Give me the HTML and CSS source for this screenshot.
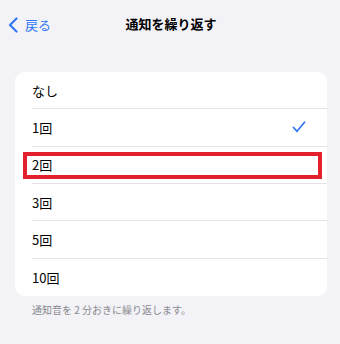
FILE: index.html
```html
<!DOCTYPE html>
<html lang="ja">
<head>
<meta charset="utf-8">
<link rel="stylesheet" href="styles.css">
</head>
<body>
<div class="page">
  <header class="nav">
    <div class="back">
      <svg class="chev" width="10" height="16" viewBox="0 0 10 16"><path d="M8.5 1.5 L2 8 L8.5 14.5" fill="none" stroke="#3478f6" stroke-width="2.2" stroke-linecap="round" stroke-linejoin="round"/></svg>
      <span class="back-label">戻る</span>
    </div>
    <div class="title">通知を繰り返す</div>
  </header>
  <div class="card">
    <div class="row"><span>なし</span></div>
    <div class="row"><span>1回</span>
      <svg class="check" width="14" height="12" viewBox="0 0 14 12"><path d="M1.5 6.5 L5 10.3 L12.5 1.2" fill="none" stroke="#3478f6" stroke-width="1.8" stroke-linecap="round" stroke-linejoin="round"/></svg>
    </div>
    <div class="row"><span>2回</span><div class="highlight"></div></div>
    <div class="row"><span>3回</span></div>
    <div class="row"><span>5回</span></div>
    <div class="row last"><span>10回</span></div>
  </div>
  <p class="footer">通知音を 2 分おきに繰り返します。</p>
</div>
</body>
</html>
```
FILE: styles.css
```css
html, body {
  margin: 0;
  padding: 0;
  background: #f2f2f7;
}
body {
  font-family: "Noto Sans CJK JP", "Noto Sans", sans-serif;
  color: #000;
}
.page {
  width: 340px;
  height: 344px;
  overflow: hidden;
}
.nav {
  position: relative;
  height: 48px;
  display: flex;
  align-items: center;
  justify-content: center;
}
.back {
  position: absolute;
  left: 8px;
  top: 16px;
  display: flex;
  align-items: center;
  gap: 7px;
  color: #3478f6;
}
.chev { display: block; }
.back-label {
  font-size: 13px;
  line-height: 18px;
}
.title {
  font-size: 13px;
  font-weight: 700;
  margin-left: 2px;
  line-height: 18px;
}
.card {
  margin: 24px 13px 0 15px;
  background: #fff;
  border-radius: 9px;
  overflow: hidden;
}
.row {
  position: relative;
  height: 37.33px;
  box-sizing: border-box;
  margin-left: 17px;
  padding-right: 21px;
  display: flex;
  align-items: center;
  justify-content: space-between;
  border-bottom: 1px solid #e3e3e6;
  font-size: 13px;
}
.row.last { border-bottom: none; }
.check { display: block; margin-top: -1px; }
.highlight {
  position: absolute;
  left: -9px;
  right: 5px;
  top: 5px;
  height: 27px;
  box-sizing: border-box;
  border: 4px solid #e3202b;
}
.footer {
  margin: 7px 0 0 32px;
  font-size: 10px;
  line-height: 14px;
  color: #8a8a8e;
}
```
